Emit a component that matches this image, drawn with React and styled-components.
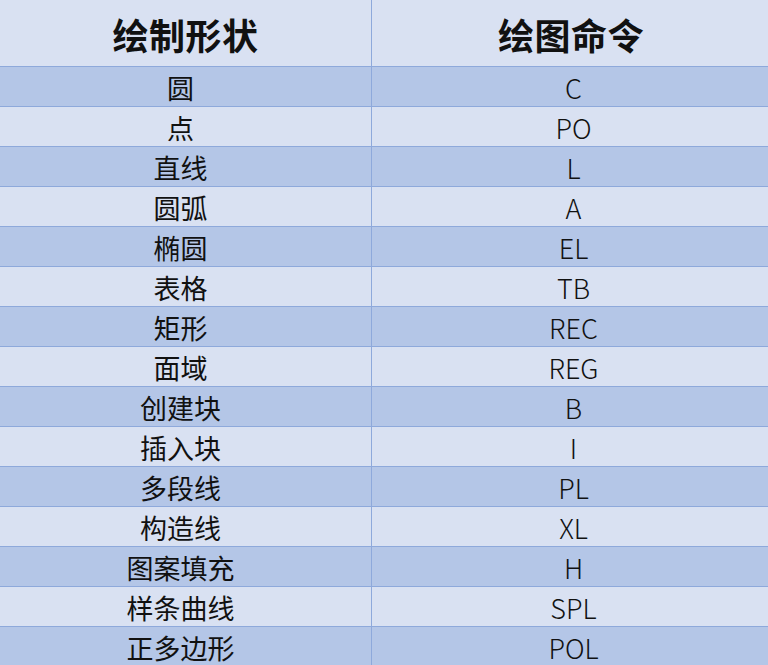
import React from "react";
import styled, { createGlobalStyle } from "styled-components";

const GlobalStyle = createGlobalStyle`
  html, body {
    margin: 0;
    padding: 0;
    background: #d9e1f2;
  }
`;

const Table = styled.div`
  display: grid;
  grid-template-columns: 372px 396px;
  width: 768px;
  height: 665px;
  overflow: hidden;
  font-family: "Noto Sans CJK SC", "Noto Sans", sans-serif;
  color: #111111;
`;

const Cell = styled.div`
  display: flex;
  align-items: center;
  justify-content: center;
  box-sizing: border-box;
  height: 40px;
  padding-top: 2px;
  padding-left: ${(props) => (props.last ? "7px" : "0")};
  padding-right: ${(props) => (props.last ? "0" : "10px")};
  border-bottom: 1px solid #8ea9db;
  border-right: ${(props) => (props.last ? "none" : "1px solid #8ea9db")};
  background: ${(props) => (props.shade ? "#b4c6e7" : "#d9e1f2")};
  font-size: 27px;
  font-weight: ${(props) => (props.last ? 300 : 400)};
  line-height: 1;
`;

const HeadCell = styled(Cell)`
  height: 67px;
  padding-top: 1px;
  padding-left: ${(props) => (props.last ? "2px" : "0")};
  padding-right: 0;
  font-size: 36px;
  font-weight: 700;
  letter-spacing: 0.5px;
`;

const rows = [
  ["圆", "C"],
  ["点", "PO"],
  ["直线", "L"],
  ["圆弧", "A"],
  ["椭圆", "EL"],
  ["表格", "TB"],
  ["矩形", "REC"],
  ["面域", "REG"],
  ["创建块", "B"],
  ["插入块", "I"],
  ["多段线", "PL"],
  ["构造线", "XL"],
  ["图案填充", "H"],
  ["样条曲线", "SPL"],
  ["正多边形", "POL"],
];

function App() {
  return (
    <>
      <GlobalStyle />
      <Table>
        <HeadCell>绘制形状</HeadCell>
        <HeadCell last>绘图命令</HeadCell>
        {rows.map(([shape, cmd], i) => (
          <React.Fragment key={cmd}>
            <Cell shade={i % 2 === 0}>{shape}</Cell>
            <Cell shade={i % 2 === 0} last>
              {cmd}
            </Cell>
          </React.Fragment>
        ))}
      </Table>
    </>
  );
}

export default App;
